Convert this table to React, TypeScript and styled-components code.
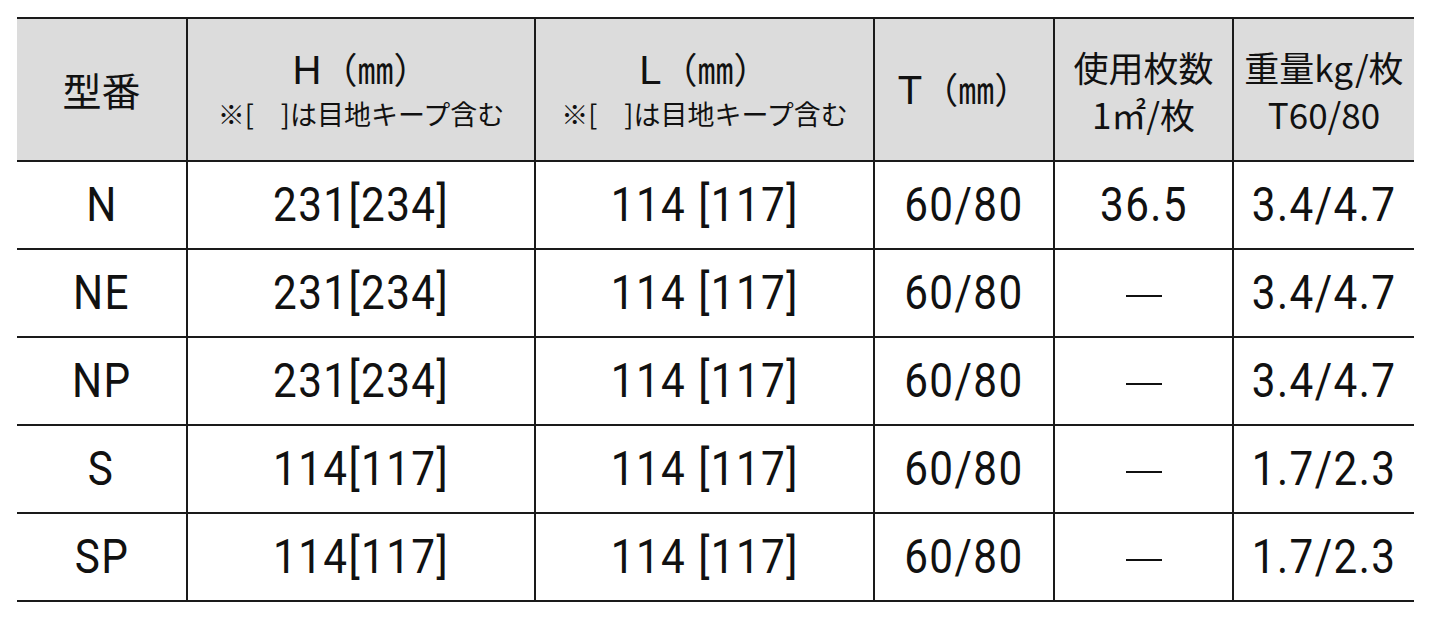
import { createGlobalStyle } from "styled-components";
import styled from "styled-components";

const GlobalStyle = createGlobalStyle`
  html, body {
    margin: 0;
    padding: 0;
    background: #ffffff;
  }
`;

const Page = styled.div`
  padding: 17px 18px 0 17px;
`;

const Table = styled.table`
  width: 1397px;
  border-collapse: collapse;
  table-layout: fixed;
  color: #111111;
  border-top: 2px solid #1a1a1a;
  border-bottom: 2px solid #1a1a1a;
`;

const HeadCell = styled.th`
  height: 141px;
  padding: 0;
  background: #dcdcdc;
  font-family: "Noto Sans CJK JP", "Noto Sans", sans-serif;
  font-weight: 400;
  font-size: 35px;
  line-height: 47px;
  text-align: center;
  vertical-align: middle;
  border-left: 2px solid #1a1a1a;
  border-bottom: 2px solid #1a1a1a;

  &:first-child {
    border-left: none;
  }
`;

const HeadLine = styled.div`
  white-space: nowrap;
`;

const ModelLabel = styled.span`
  font-size: 39px;
`;

const BigLabel = styled.span`
  font-family: "Liberation Sans", "Noto Sans CJK JP", sans-serif;
  font-size: 40px;
`;

const Unit = styled.span`
  font-size: 36px;
`;

const Note = styled.div`
  font-size: 27px;
  line-height: 40px;
  white-space: nowrap;
`;

const Cell = styled.td`
  height: 86px;
  padding: 0;
  font-family: "Roboto", "Noto Sans CJK JP", sans-serif;
  font-size: 48px;
  line-height: 1;
  text-align: center;
  vertical-align: middle;
  border-left: 2px solid #1a1a1a;
  border-bottom: 2px solid #1a1a1a;

  &:first-child {
    border-left: none;
  }
`;

const Value = styled.span`
  display: inline-block;
  transform: scaleX(0.88);
  letter-spacing: 1.6px;
  white-space: pre;
`;

const Dash = styled.span`
  display: inline-block;
  width: 36px;
  height: 2px;
  background: #111111;
  vertical-align: middle;
`;

const widths = [170, 348, 339, 180, 179, 181];

const rows = [
  ["N", "231[234]", "114 [117]", "60/80", "36.5", "3.4/4.7"],
  ["NE", "231[234]", "114 [117]", "60/80", "-", "3.4/4.7"],
  ["NP", "231[234]", "114 [117]", "60/80", "-", "3.4/4.7"],
  ["S", "114[117]", "114 [117]", "60/80", "-", "1.7/2.3"],
  ["SP", "114[117]", "114 [117]", "60/80", "-", "1.7/2.3"],
];

const note = "※[　]は目地キープ含む";

export default function App() {
  return (
    <>
      <GlobalStyle />
      <Page>
        <Table>
          <colgroup>
            {widths.map((w, i) => (
              <col key={i} style={{ width: w }} />
            ))}
          </colgroup>
          <thead>
            <tr>
              <HeadCell>
                <ModelLabel>型番</ModelLabel>
              </HeadCell>
              <HeadCell>
                <HeadLine>
                  <BigLabel>H</BigLabel>
                  <Unit>（㎜）</Unit>
                </HeadLine>
                <Note>{note}</Note>
              </HeadCell>
              <HeadCell>
                <HeadLine>
                  <BigLabel>L</BigLabel>
                  <Unit>（㎜）</Unit>
                </HeadLine>
                <Note>{note}</Note>
              </HeadCell>
              <HeadCell>
                <HeadLine>
                  <BigLabel>T</BigLabel>
                  <Unit>（㎜）</Unit>
                </HeadLine>
              </HeadCell>
              <HeadCell>
                <HeadLine>使用枚数</HeadLine>
                <HeadLine>1㎡/枚</HeadLine>
              </HeadCell>
              <HeadCell>
                <HeadLine>重量kg/枚</HeadLine>
                <HeadLine>T60/80</HeadLine>
              </HeadCell>
            </tr>
          </thead>
          <tbody>
            {rows.map((r) => (
              <tr key={r[0]}>
                {r.map((v, i) => (
                  <Cell key={i}>{v === "-" ? <Dash /> : <Value>{v}</Value>}</Cell>
                ))}
              </tr>
            ))}
          </tbody>
        </Table>
      </Page>
    </>
  );
}
